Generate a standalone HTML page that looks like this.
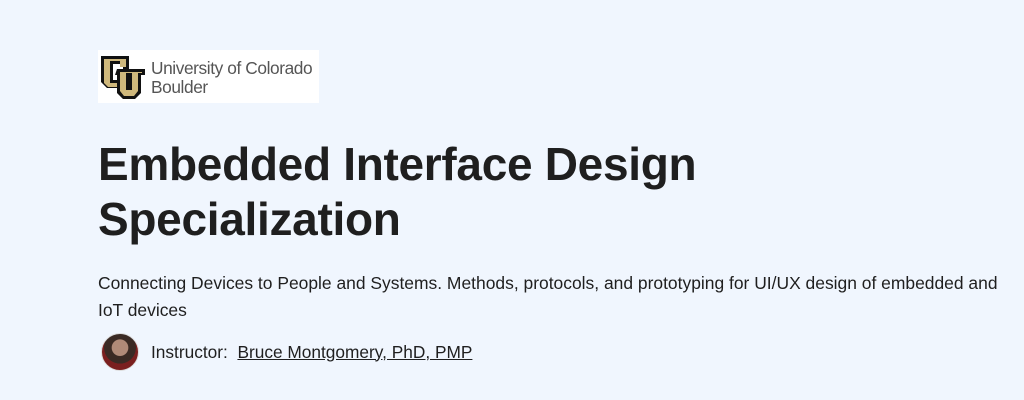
<!DOCTYPE html>
<html><head><meta charset="utf-8"><style>
body{margin:0;width:1024px;height:400px;background:#f0f6fe;font-family:"Liberation Sans",sans-serif;color:#1f1f1f;overflow:hidden;position:relative}
.logo{position:absolute;left:98px;top:50px;width:221px;height:53px;background:#fff}
.logo .t{position:absolute;left:53px;top:9px;font-size:17.3px;line-height:19px;color:#555;letter-spacing:-0.4px}
h1{position:absolute;left:98px;top:137px;margin:0;font-size:46px;line-height:55px;font-weight:bold;color:#1f1f1f;letter-spacing:-0.3px}
.sub{position:absolute;left:98px;top:270px;width:915px;font-size:17.45px;line-height:27px;color:#1f1f1f}
.ins{position:absolute;left:101px;top:333px;display:flex;align-items:center;font-size:17.3px}
.av{width:36px;height:36px;border-radius:50%;background:radial-gradient(circle at 50% 38%,#b08a78 0 28%,#3a2a24 30% 55%,#7a1f1f 56%);margin-right:12px;border:1px solid #ddd}
a{color:#1f1f1f;text-decoration:underline}
</style></head><body>
<div class="logo">
<svg width="48" height="48" viewBox="0 0 48 48" style="position:absolute;left:1px;top:3px">
<path d="M2 3h28v14h-6v-6H14v16h10v-4h4v12H8l-6-6z" fill="#111"/>
<path d="M5 6h22v8h-6v-6H11v22h16v-4h-2v8H9l-4-4z" fill="#cfb87c"/>
<path d="M18 16h28v6h-4v18l-6 6H24l-6-6V22h-2z" fill="#111"/>
<path d="M21 19h22v1h-4v18l-4 5H25l-4-5V20z" fill="#cfb87c"/>
<path d="M27 20h6v17h-6z" fill="#111"/>
</svg>
<div class="t">University of Colorado<br>Boulder</div>
</div>
<h1>Embedded Interface Design<br>Specialization</h1>
<div class="sub">Connecting Devices to People and Systems. Methods, protocols, and prototyping for UI/UX design of embedded and IoT devices</div>
<div class="ins"><div class="av"></div><span>Instructor:&nbsp;&nbsp;<a>Bruce Montgomery, PhD, PMP</a></span></div>
</body></html>
